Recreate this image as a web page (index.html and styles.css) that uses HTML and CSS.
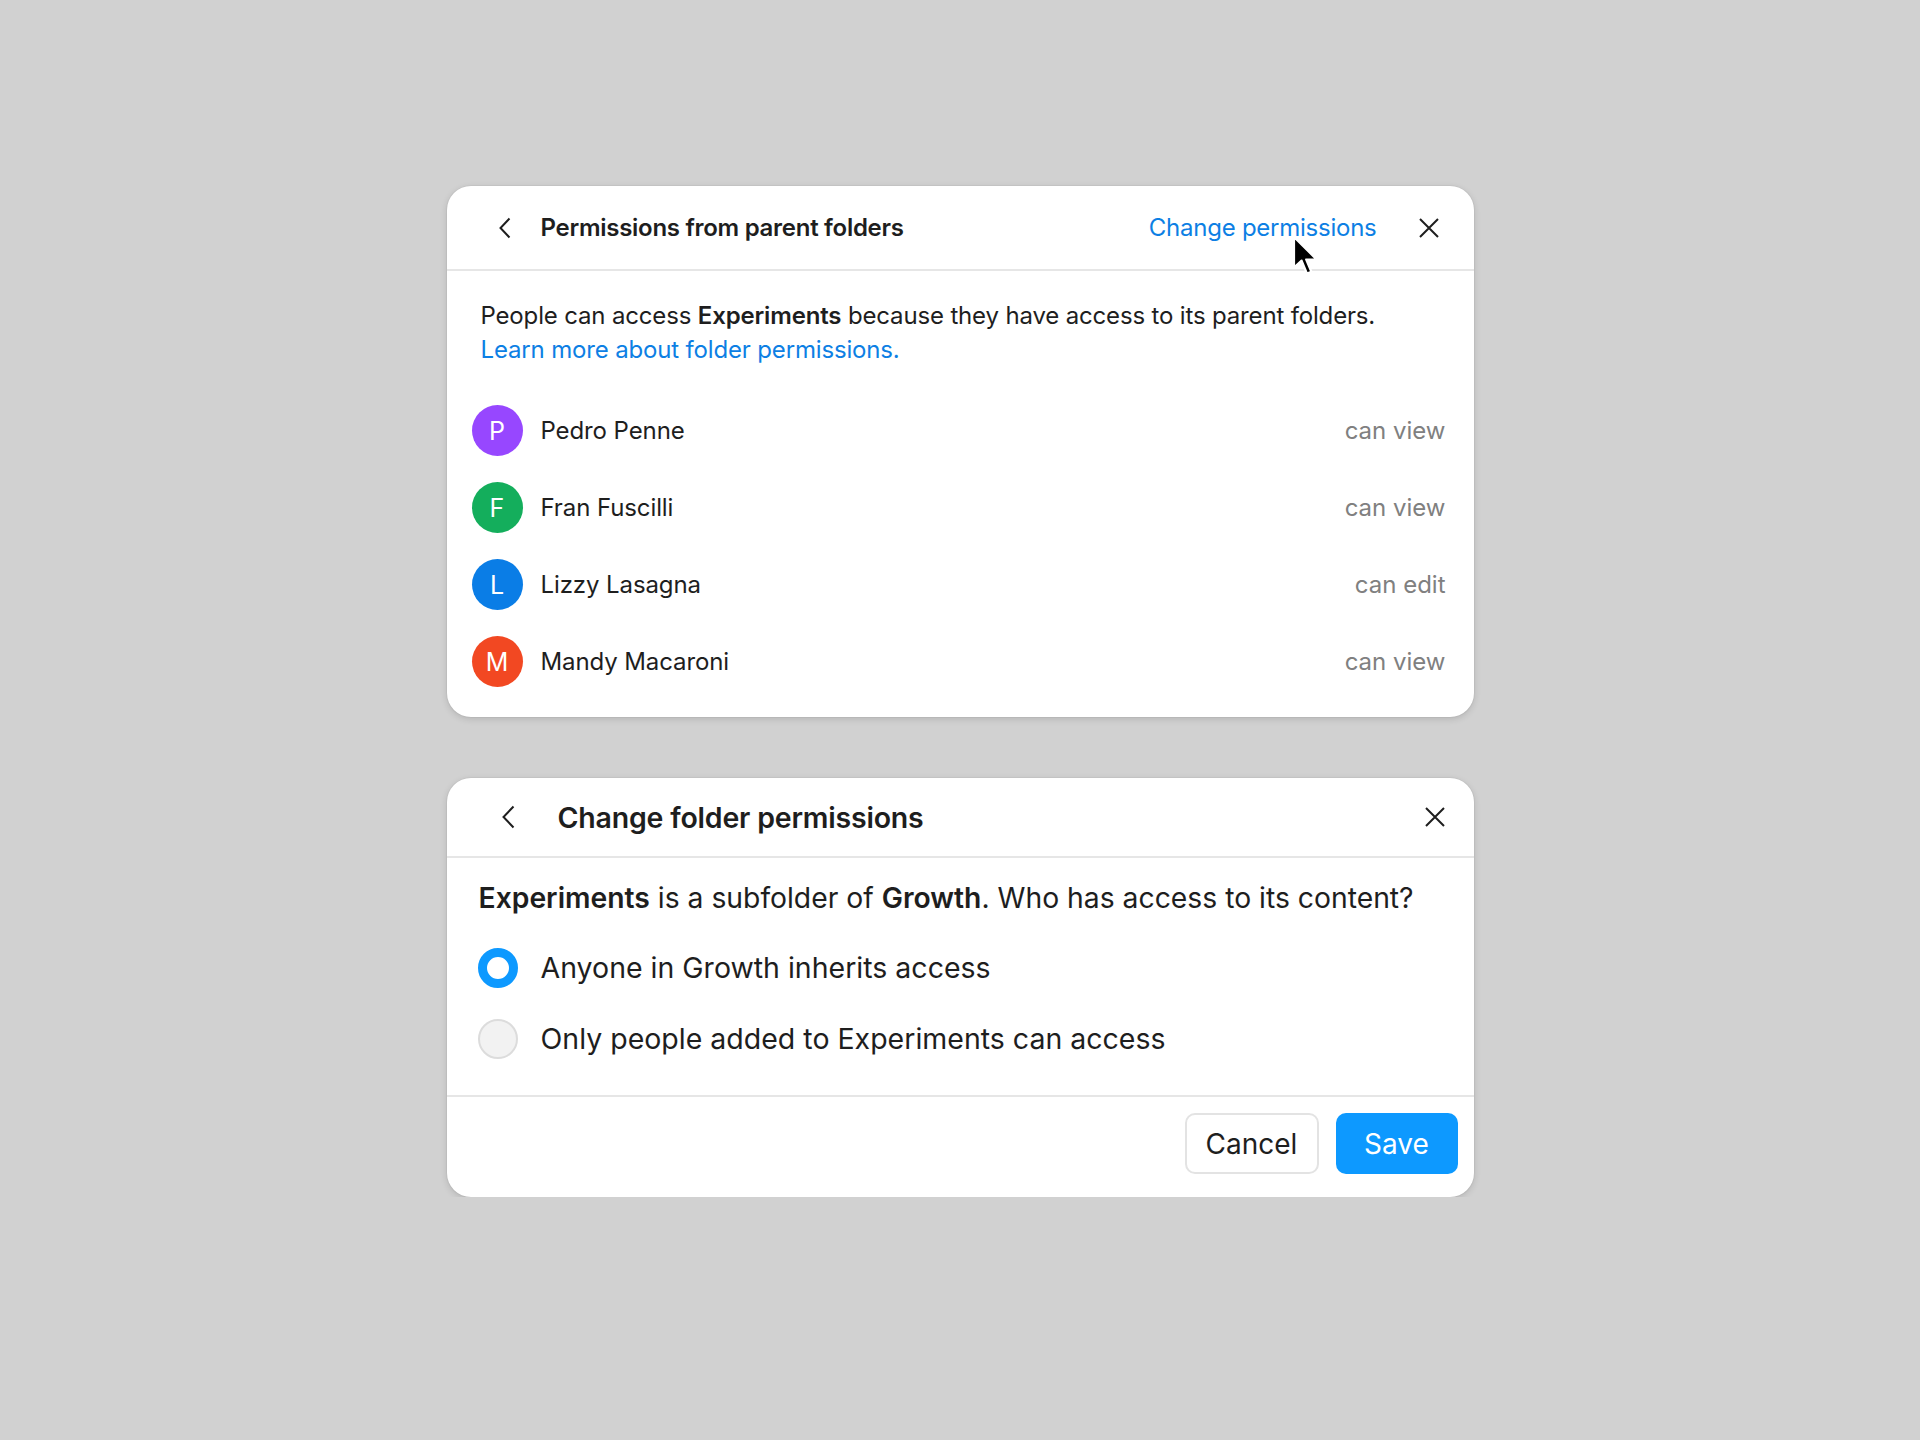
FILE: index.html
```html
<!DOCTYPE html>
<html lang="en">
<head>
<meta charset="utf-8">
<title>Folder permissions</title>
<link rel="stylesheet" href="styles.css">
</head>
<body>
<main class="stage">

  <section class="card card-perms">
    <header class="card-head">
      <button class="icon-btn back" aria-label="Back">
        <svg width="12" height="22" viewBox="0 0 12 22"><path d="M10.5 1.5 L1.5 11 L10.5 20.5" fill="none" stroke="#1e1e1e" stroke-width="2"/></svg>
      </button>
      <h2 class="head-title">Permissions from parent folders</h2>
      <a class="head-link" href="#">Change permissions</a>
      <button class="icon-btn close" aria-label="Close">
        <svg width="20" height="20" viewBox="0 0 20 20"><path d="M1 1 L19 19 M19 1 L1 19" fill="none" stroke="#1e1e1e" stroke-width="2"/></svg>
      </button>
      <svg class="pointer" width="29" height="42" viewBox="0 0 29 42">
        <path d="M2 2 L2 32.5 L9.6 25.6 L15 38.6 L19.4 36.8 L14.2 24.6 L24.8 24.6 Z" fill="#000" stroke="#fff" stroke-width="2.2" stroke-linejoin="round"/>
      </svg>
    </header>

    <div class="intro">
      <p>People can access <b>Experiments</b> because they have access to its parent folders.<br><a href="#">Learn more about folder permissions.</a></p>
    </div>

    <ul class="people">
      <li class="person"><span class="avatar av-purple">P</span><span class="name">Pedro Penne</span><span class="role">can view</span></li>
      <li class="person"><span class="avatar av-green">F</span><span class="name">Fran Fuscilli</span><span class="role">can view</span></li>
      <li class="person"><span class="avatar av-blue">L</span><span class="name">Lizzy Lasagna</span><span class="role">can edit</span></li>
      <li class="person"><span class="avatar av-red">M</span><span class="name">Mandy Macaroni</span><span class="role">can view</span></li>
    </ul>
  </section>

  <section class="card card-change">
    <header class="card-head head-lg">
      <button class="icon-btn back" aria-label="Back">
        <svg width="13" height="24" viewBox="0 0 13 24"><path d="M11.5 1.5 L1.5 12 L11.5 22.5" fill="none" stroke="#1e1e1e" stroke-width="2"/></svg>
      </button>
      <h2 class="head-title">Change folder permissions</h2>
      <button class="icon-btn close" aria-label="Close">
        <svg width="20" height="20" viewBox="0 0 20 20"><path d="M1 1 L19 19 M19 1 L1 19" fill="none" stroke="#1e1e1e" stroke-width="2"/></svg>
      </button>
    </header>

    <div class="change-body">
      <p class="question"><b>Experiments</b> is a subfolder of <b>Growth</b>. Who has access to its content?</p>
      <label class="option"><span class="radio radio-on"></span><span>Anyone in Growth inherits access</span></label>
      <label class="option"><span class="radio"></span><span>Only people added to Experiments can access</span></label>
    </div>

    <footer class="card-foot">
      <button class="btn btn-secondary">Cancel</button>
      <button class="btn btn-primary">Save</button>
    </footer>
  </section>

</main>
</body>
</html>
```

FILE: styles.css
```css
* { box-sizing: border-box; }

html, body {
  margin: 0;
  padding: 0;
}

body {
  background: #d1d1d1;
  font-family: Inter, "Noto Sans", "Liberation Sans", sans-serif;
  color: #1e1e1e;
}

.stage {
  display: flex;
  flex-direction: column;
  align-items: center;
  gap: 61px;
  padding-top: 186px;
}

.card {
  width: 1027px;
  background: #fff;
  border-radius: 24px;
  box-shadow: 0 2px 7px rgba(0, 0, 0, 0.14), 0 0 0 1px rgba(0, 0, 0, 0.03);
}

/* header row */
.card-head {
  position: relative;
  display: flex;
  align-items: center;
  height: 85px;
  padding: 0 35px 0 52px;
  border-bottom: 2px solid #e6e6e6;
}

.icon-btn {
  display: flex;
  align-items: center;
  justify-content: center;
  padding: 0;
  border: 0;
  background: none;
}

.head-title {
  margin: 0 0 0 30px;
  font-size: 24px;
  font-weight: 600;
  letter-spacing: -0.28px;
  flex: 1;
}

.head-link {
  color: #0d7fe4;
  text-decoration: none;
  font-size: 24px;
  letter-spacing: -0.25px;
  margin-right: 42px;
}

/* mouse pointer resting on the link */
.pointer {
  position: absolute;
  left: 845px;
  top: 49px;
}

/* intro paragraph */
.intro {
  padding: 28px 34px 0 34px;
}

.intro p {
  margin: 0;
  font-size: 24px;
  line-height: 34px;
  letter-spacing: -0.16px;
}

.intro b { font-weight: 600; }

.intro a {
  color: #0d7fe4;
  text-decoration: none;
}

/* people list */
.people {
  list-style: none;
  margin: 25px 0 0;
  padding: 0 28px 17px 25px;
}

.person {
  display: flex;
  align-items: center;
  height: 77px;
}

.avatar {
  width: 51px;
  height: 51px;
  border-radius: 50%;
  display: flex;
  align-items: center;
  justify-content: center;
  color: #fff;
  font-size: 25px;
  flex: none;
}

.av-purple { background: #9747ff; }
.av-green  { background: #14ae5c; }
.av-blue   { background: #0a7de6; }
.av-red    { background: #f24822; }

.name {
  margin-left: 18px;
  font-size: 24px;
  letter-spacing: -0.1px;
  flex: 1;
}

.role {
  font-size: 24px;
  color: #808080;
}

/* change dialog */
.head-lg {
  height: 80px;
  padding: 0 29px 0 55px;
}

.head-lg .head-title {
  margin-left: 43px;
  font-size: 28.5px;
  letter-spacing: -0.2px;
}

.change-body {
  padding: 22px 32px 21px 31px;
}

.question {
  margin: 0 0 16px 1px;
  font-size: 28.3px;
  line-height: 36px;
}

.question b { font-weight: 600; }

.option {
  display: flex;
  align-items: center;
  height: 71px;
  font-size: 28.5px;
}

.radio {
  width: 40px;
  height: 40px;
  border-radius: 50%;
  background: #f2f2f2;
  border: 2px solid #dcdcdc;
  margin-right: 23px;
  flex: none;
}

.radio-on {
  background: #fff;
  border: 9.5px solid #0d99ff;
}

.card-foot {
  display: flex;
  justify-content: flex-end;
  gap: 17px;
  padding: 16px 16px 23px;
  border-top: 2px solid #e6e6e6;
}

.btn {
  height: 61px;
  border-radius: 10px;
  font-family: inherit;
  font-size: 28px;
  padding: 0;
}

.btn-secondary {
  width: 134px;
  background: #fff;
  color: #1e1e1e;
  border: 2px solid #e3e3e3;
}

.btn-primary {
  width: 122px;
  background: #0d99ff;
  color: #fff;
  border: 0;
}
```
